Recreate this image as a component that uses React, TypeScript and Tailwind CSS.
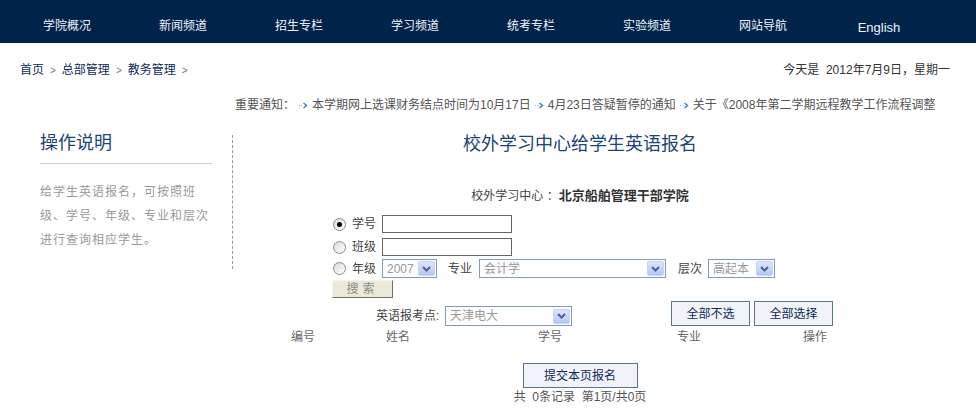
import React from 'react';

const navItems = ['学院概况', '新闻频道', '招生专栏', '学习频道', '统考专栏', '实验频道', '网站导航', 'English'];

const font = { fontFamily: '"Liberation Sans", "Noto Sans CJK SC", sans-serif' };

const Arrow = () => (
  <svg width="9" height="7" viewBox="0 0 9 7" className="inline-block mx-[4px] align-middle">
    <rect x="0" y="3" width="1" height="1" fill="#8fb0d8" />
    <rect x="2" y="3" width="1" height="1" fill="#8fb0d8" />
    <path d="M4.5 1 L7.5 3.5 L4.5 6" stroke="#2d7fd6" strokeWidth="1.4" fill="none" />
  </svg>
);

const Radio = ({ checked }: { checked?: boolean }) => (
  <span className="w-[13px] h-[13px] rounded-full border border-[#8c8c8c] bg-gradient-to-br from-[#dcdcd4] to-white flex items-center justify-center shrink-0">
    {checked && <span className="w-[5px] h-[5px] rounded-full bg-black" />}
  </span>
);

const Select = ({ value, width }: { value: string; width: string }) => (
  <div className={`${width} h-[19px] border border-[#7f9db9] bg-white flex items-center justify-between pl-[4px] pr-[1px]`}>
    <span className="text-[12px] text-[#999] leading-none">{value}</span>
    <span className="w-[17px] h-[15px] rounded-[2px] border border-[#c3d3fd] bg-gradient-to-b from-[#dbe5ff] to-[#b3c7f5] flex items-center justify-center">
      <svg width="9" height="6" viewBox="0 0 9 6">
        <path d="M1 1 L4.5 4.5 L8 1" stroke="#4d6185" strokeWidth="2" fill="none" />
      </svg>
    </span>
  </div>
);

const Btn = ({ children, className = '' }: { children: React.ReactNode; className?: string }) => (
  <button className={`h-[25px] border border-[#5b7393] bg-[#f1f3f8] text-[12px] text-[#0d2a58] ${className}`}>{children}</button>
);

export default function App() {
  return (
    <div className="w-[976px] h-[413px] bg-white overflow-hidden text-[12px]" style={font}>
      <div className="h-[43px] bg-[#00234a] flex pl-[9px] pt-[9px] items-center">
        {navItems.map((n) => (
          <div key={n} className={`w-[116px] text-center text-[#eef3fa] ${n === 'English' ? 'text-[13px] pt-[3px]' : 'text-[12px]'}`}>
            {n}
          </div>
        ))}
      </div>

      <div className="h-[54px] flex items-center justify-between pl-[20px] pr-[26px]">
        <div className="flex items-center gap-[6px] text-[#0b2b58]">
          <span>首页</span><span className="text-[#777] text-[10px]">&gt;</span>
          <span>总部管理</span><span className="text-[#777] text-[10px]">&gt;</span>
          <span>教务管理</span><span className="text-[#777] text-[10px]">&gt;</span>
        </div>
        <div className="text-[#333]">今天是&nbsp; 2012年7月9日，星期一</div>
      </div>

      <div className="h-[17px] leading-[17px] pl-[235px] whitespace-nowrap overflow-hidden text-[#555]">
        重要通知：<Arrow />本学期网上选课财务结点时间为10月17日<Arrow />4月23日答疑暂停的通知<Arrow />关于《2008年第二学期远程教学工作流程调整
      </div>

      <div className="flex items-start mt-[15px]">
        <div className="ml-[40px] w-[172px]">
          <div className="pt-[4px] pb-[10px] text-[18px] leading-[20px] text-[#1e4375] border-b border-[#cfcfcf]">操作说明</div>
          <div className="mt-[16px] text-[#999] leading-[24px] tracking-[1px]">
            给学生英语报名，可按照班<br />级、学号、年级、专业和层次<br />进行查询相应学生。
          </div>
        </div>
        <div className="ml-[20px] mt-[6px] h-[134px] border-l border-dashed border-[#999]" />

        <div className="w-[694px]">
          <div className="pt-[5px] text-center text-[18px] leading-[20px] text-[#1c4578]">校外学习中心给学生英语报名</div>
          <div className="mt-[34px] text-center leading-[16px] text-[#444]">
            校外学习中心&nbsp;：<b className="text-[#333] text-[13px]">北京船舶管理干部学院</b>
          </div>

          <div className="pl-[100px]">
            <div className="mt-[11px] h-[18px] flex items-center">
              <Radio checked />
              <span className="ml-[6px] w-[24px] text-[#444]">学号</span>
              <div className="ml-[6px] w-[130px] h-[18px] border border-[#666] bg-white" />
            </div>
            <div className="mt-[5px] h-[18px] flex items-center">
              <Radio />
              <span className="ml-[6px] w-[24px] text-[#444]">班级</span>
              <div className="ml-[6px] w-[130px] h-[18px] border border-[#666] bg-white" />
            </div>
            <div className="mt-[3px] h-[19px] flex items-center text-[#444]">
              <Radio />
              <span className="ml-[6px] w-[24px]">年级</span>
              <div className="ml-[6px]"><Select value="2007" width="w-[55px]" /></div>
              <span className="ml-[11px] w-[24px]">专业</span>
              <div className="ml-[7px]"><Select value="会计学" width="w-[187px]" /></div>
              <span className="ml-[12px] w-[24px]">层次</span>
              <div className="ml-[6px]"><Select value="高起本" width="w-[67px]" /></div>
            </div>
            <button className="mt-[2px] -ml-[1px] w-[61px] h-[18px] bg-[#ece9d8] border-t border-l border-t-[#f5f4ee] border-l-[#f5f4ee] border-r border-b border-r-[#716f64] border-b-[#716f64] text-[#888] text-[12px] leading-none tracking-[4px]">
              搜索
            </button>
          </div>

          <div className="mt-[3px] h-[25px] flex items-end pl-[143px]">
            <div className="flex items-center h-[20px] text-[#444]">
              <span className="w-[69px]">英语报考点:</span>
              <Select value="天津电大" width="w-[127px] h-[20px]" />
            </div>
            <Btn className="ml-[99px] w-[79px] self-start">全部不选</Btn>
            <Btn className="ml-[4px] w-[79px] self-start">全部选择</Btn>
          </div>

          <div className="mt-[3px] leading-[16px] flex pl-[58px] text-[#666]">
            <span className="w-[95px]">编号</span>
            <span className="w-[152px]">姓名</span>
            <span className="w-[139px]">学号</span>
            <span className="w-[126px]">专业</span>
            <span>操作</span>
          </div>

          <div className="mt-[18px] flex justify-center">
            <Btn className="w-[115px]">提交本页报名</Btn>
          </div>
          <div className="mt-[1px] text-center leading-[16px] text-[#555]">共&nbsp; 0条记录&nbsp; 第1页/共0页</div>
        </div>
      </div>
    </div>
  );
}
